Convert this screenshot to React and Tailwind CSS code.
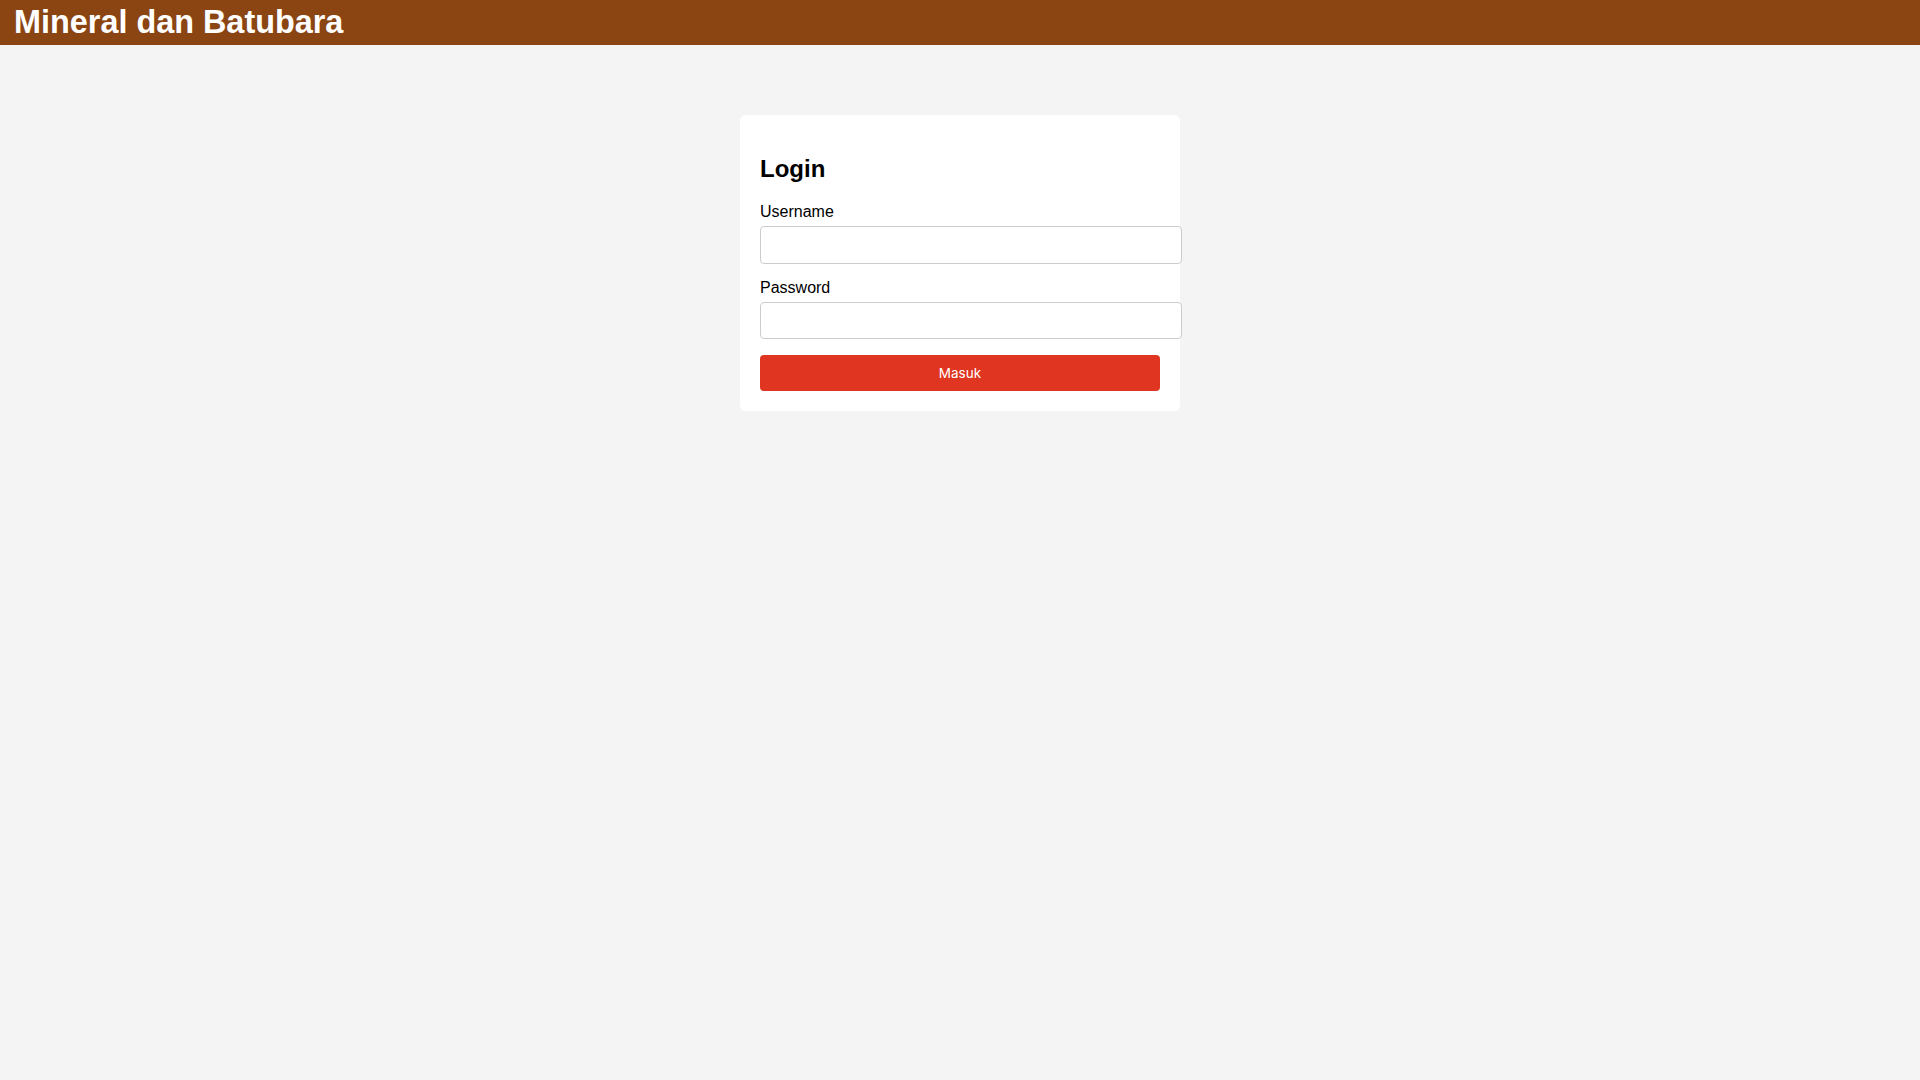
export default function App() {
  return (
    <div className="min-h-screen bg-[#f4f4f4]" style={{ fontFamily: '"Liberation Sans", Arial, sans-serif' }}>
      <header className="h-[45px] bg-[#8b4513] pl-[14px] pb-[2px] flex items-center">
        <h1 className="text-[32.4px] font-bold text-white leading-[36px]">Mineral dan Batubara</h1>
      </header>
      <main className="flex justify-center pt-[70px]">
        <div className="w-[440px] bg-white rounded-md px-5 pt-5 pb-5 flex flex-col">
          <h2 className="mt-5 text-[24px] font-bold leading-[28px] text-black">Login</h2>
          <label className="mt-[19px] text-[16px] leading-[20px] text-black">Username</label>
          <input
            type="text"
            className="mt-[4px] w-[422px] shrink-0 h-[38px] border border-[#cccccc] rounded-[4px] px-[10px] bg-white outline-none"
          />
          <label className="mt-[14px] text-[16px] leading-[20px] text-black">Password</label>
          <input
            type="password"
            className="mt-[4px] w-[422px] shrink-0 h-[37px] border border-[#cccccc] rounded-[4px] px-[10px] bg-white outline-none"
          />
          <button
            className="mt-4 h-[36px] w-full rounded-[4px] bg-[#e03520] text-white text-[13.5px]"
            style={{ fontFamily: 'Inter, "Noto Sans", sans-serif' }}
          >
            Masuk
          </button>
        </div>
      </main>
    </div>
  );
}
